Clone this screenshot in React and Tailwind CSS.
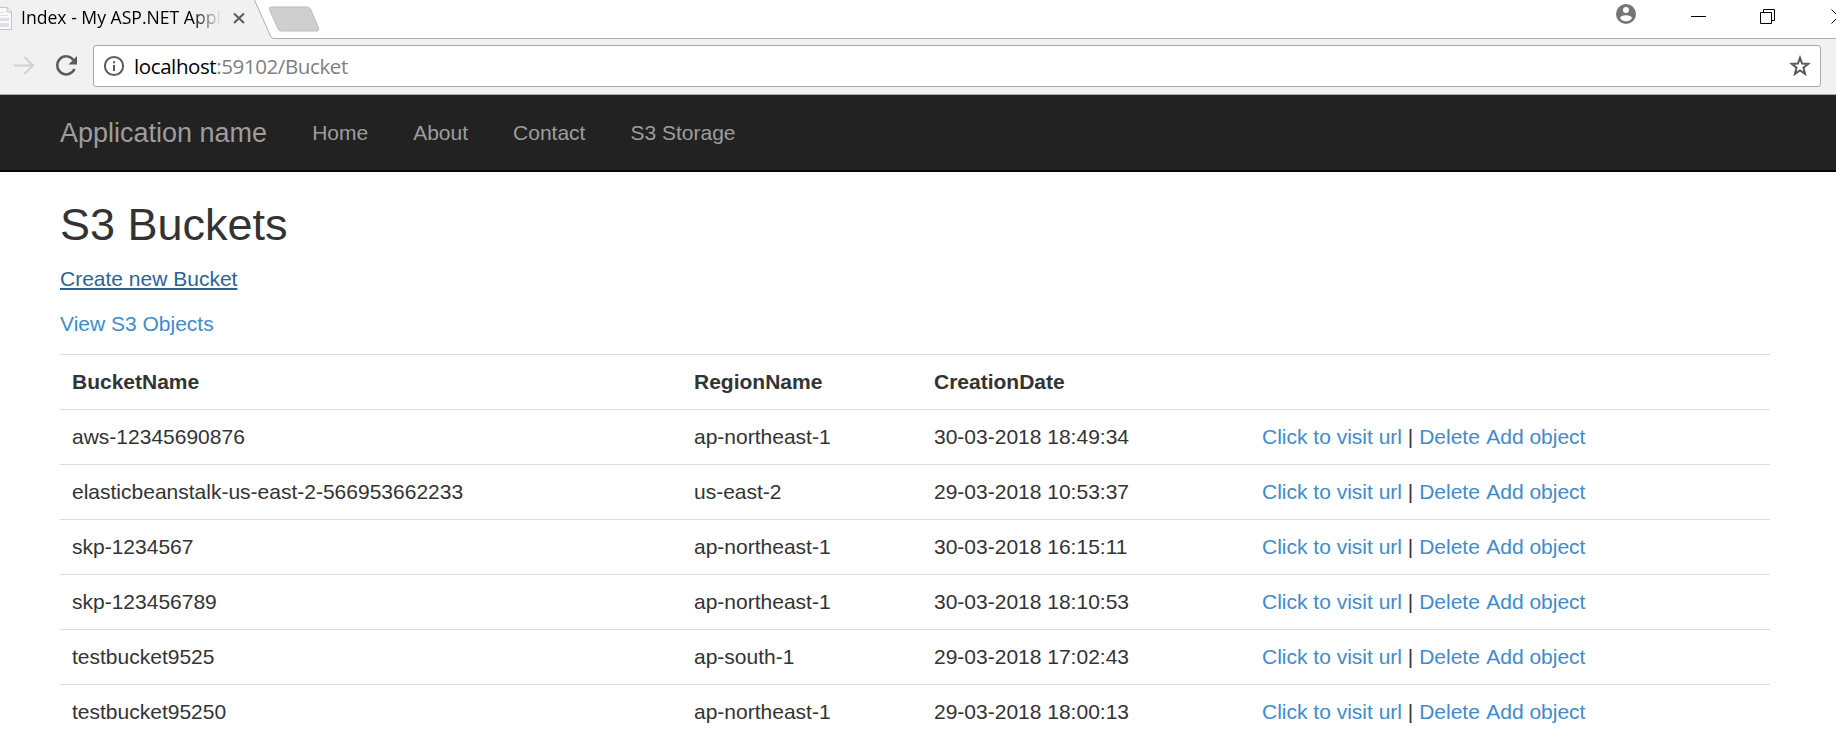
const buckets = [
  ["aws-12345690876", "ap-northeast-1", "30-03-2018 18:49:34"],
  ["elasticbeanstalk-us-east-2-566953662233", "us-east-2", "29-03-2018 10:53:37"],
  ["skp-1234567", "ap-northeast-1", "30-03-2018 16:15:11"],
  ["skp-123456789", "ap-northeast-1", "30-03-2018 18:10:53"],
  ["testbucket9525", "ap-south-1", "29-03-2018 17:02:43"],
  ["testbucket95250", "ap-northeast-1", "29-03-2018 18:00:13"],
];

function TabStrip() {
  return (
    <div className="flex h-[39px] bg-white">
      <div className="flex w-[221px] shrink-0 bg-[#f1f1f1]">
        <svg className="w-[21px] shrink-0" width="21" height="39" viewBox="0 0 21 39" fill="none">
          <path d="M-7.500 7.500H7L11.500 12V29.500H-7.500Z" fill="#fafafa" stroke="#c4c4c4" />
          <path d="M7 7.500V12H11.500" stroke="#c4c4c4" />
          <path d="M-4 12.500H4M-4 15.500H8" stroke="#dedede" />
          <path d="M-4 18H9V21H-4ZM-4 23H9V27H-4Z" fill="#dbe0e8" />
        </svg>
        <span className="h-[36px] w-[200px] bg-gradient-to-r from-black from-86% to-transparent bg-clip-text font-['Open_Sans',sans-serif] text-[17.6px] leading-[35px] whitespace-nowrap text-transparent">
          Index - My ASP.NET Appl
        </span>
      </div>
      <svg className="shrink-0" width="109" height="39" viewBox="221 0 109 39" fill="none">
        <path d="M221 0H254.500L270.500 36.500Q271.500 38.500 274 38.500H330V39H221Z" fill="#f1f1f1" />
        <path d="M254.500 0L270.500 36Q271.500 38.500 274 38.500H330" stroke="#acacac" />
        <path d="M271 7H307Q309.500 7 310.500 9L318.500 28Q319.500 31 317 31H281.500Q279 31 278 29L269.500 9.500Q268.700 7 271 7Z" fill="#cfcfcf" stroke="#bcbcbc" />
        <path d="M234 13.500L244 23M244 13.500L234 23" stroke="#5a5a5a" strokeWidth="2" />
      </svg>
      <div className="flex flex-1 justify-end border-b border-[#acacac]">
        <svg className="shrink-0" width="236" height="38" viewBox="1600 0 236 38" fill="none">
          <circle cx="1626" cy="14" r="10" fill="#757575" />
          <circle cx="1626" cy="10" r="3" fill="#fff" />
          <path d="M1620 18Q1621 15.300 1626 15.300T1632 18Q1630 21.300 1626 21.300T1620 18Z" fill="#fff" />
          <path d="M1691 16.500H1706M1760.500 12.500H1771.500V23.500H1760.500ZM1763.500 12V9.500H1774.500V20.500H1772M1831.500 9.500L1845.500 23.500M1831.500 23.500L1845.500 9.500" stroke="#000" />
        </svg>
      </div>
    </div>
  );
}

function Toolbar() {
  return (
    <div className="flex h-14 items-start border-b border-[#a9a9a9] bg-[#f1f1f1] pt-[6px]">
      <svg className="shrink-0" width="93" height="42" viewBox="0 45 93 42" fill="none">
        <path d="M14 65.500H33M24.500 57L33 65.500L24.500 74" stroke="#d0d0d0" strokeWidth="2" />
        <path d="M73.500 60A9 9 0 1 0 74.500 69" stroke="#5a5a5a" strokeWidth="2.500" />
        <path d="M77 56V64.500H68.500Z" fill="#5a5a5a" />
      </svg>
      <div className="flex h-[42px] w-[1728px] items-center rounded-[3px] border border-[#a9a9a9] bg-white pr-[9px] pl-[9px]">
        <svg className="shrink-0" width="22" height="22" viewBox="0 0 22 22" fill="none">
          <circle cx="11" cy="11" r="9.100" stroke="#5a5a5a" strokeWidth="2" />
          <path d="M11 10V16M11 6.200V8.300" stroke="#5a5a5a" strokeWidth="2" />
        </svg>
        <span className="ml-[9px] flex-1 font-['Open_Sans',sans-serif] text-[20.5px] leading-[28px] tracking-[-0.4px] text-black">
          localhost<span className="text-[#808080]">:59102/Bucket</span>
        </span>
        <svg className="shrink-0" width="22" height="22" viewBox="0 0 22 22" fill="none">
          <path d="M11 2.800L13.100 8.500L19.300 8.900L14.500 12.700L16.100 18.900L11 15.500L5.900 18.900L7.500 12.700L2.700 8.900L8.900 8.500Z" stroke="#5a5a5a" strokeWidth="2" />
        </svg>
      </div>
    </div>
  );
}

function Navbar() {
  return (
    <nav className="flex h-[77px] items-center border-b-2 border-[#080808] bg-[#222222] pl-[60px] text-[#9d9d9d]">
      <a className="mr-[45px] text-[27px]">Application name</a>
      <div className="flex gap-[45px]">
        <a>Home</a>
        <a>About</a>
        <a>Contact</a>
        <a>S3 Storage</a>
      </div>
    </nav>
  );
}

export default function App() {
  return (
    <div className="h-[738px] w-[1836px] overflow-hidden bg-white font-['Liberation_Sans',Arial,sans-serif] text-[21px] leading-[30px] text-[#333333]">
      <TabStrip />
      <Toolbar />
      <Navbar />
      <main className="w-[1770px] pt-[28px] pl-[60px]">
        <h2 className="text-[45px] leading-[50px]">S3 Buckets</h2>
        <p className="mt-[14px]">
          <a className="text-[#2a6496] underline decoration-2 underline-offset-2">Create new Bucket</a>
        </p>
        <p className="mt-[15px]">
          <a className="text-[#428bca]">View S3 Objects</a>
        </p>
        <table className="mt-[15px] w-full table-fixed border-separate border-spacing-0 text-left [&_td]:border-t [&_td]:border-[#dddddd] [&_td]:p-3 [&_th]:border-t [&_th]:border-[#dddddd] [&_th]:p-3">
          <colgroup>
            <col className="w-[622px]" />
            <col className="w-[240px]" />
            <col className="w-[328px]" />
            <col />
          </colgroup>
          <thead>
            <tr>
              <th>BucketName</th>
              <th>RegionName</th>
              <th>CreationDate</th>
              <th></th>
            </tr>
          </thead>
          <tbody>
            {buckets.map(([name, region, date]) => (
              <tr key={name}>
                <td>{name}</td>
                <td>{region}</td>
                <td>{date}</td>
                <td>
                  <a className="text-[#428bca]">Click to visit url</a> |{" "}
                  <a className="text-[#428bca]">Delete</a> <a className="ml-[0.5px] text-[#428bca]">Add object</a>
                </td>
              </tr>
            ))}
          </tbody>
        </table>
      </main>
    </div>
  );
}
